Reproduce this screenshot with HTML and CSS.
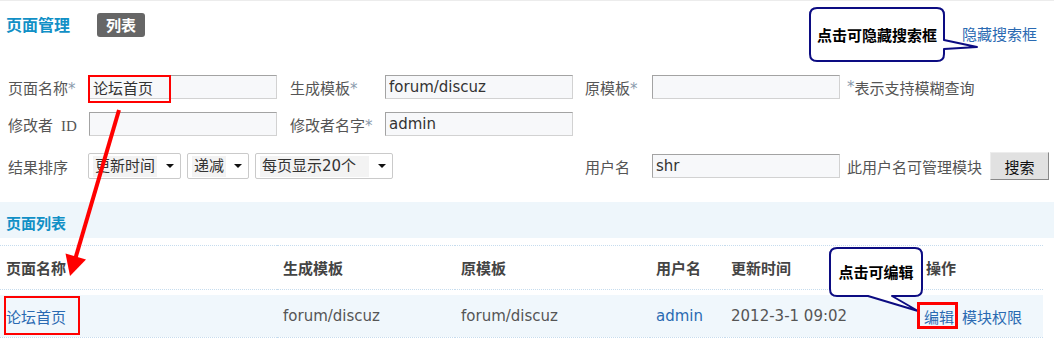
FILE: index.html
```html
<!DOCTYPE html>
<html lang="zh-CN">
<head>
<meta charset="utf-8">
<title>页面管理</title>
<link rel="stylesheet" href="styles.css">
</head>
<body>
<div class="page">
  <header class="topbar">
    <h1 class="title">页面管理</h1>
    <span class="badge">列表</span>
    <a class="toggle" href="#">隐藏搜索框</a>
  </header>

  <form class="search">
    <div class="frow">
      <label class="lbl">页面名称<i>*</i></label>
      <input class="txt" value="论坛首页">
      <label class="lbl p13">生成模板<i>*</i></label>
      <input class="txt" value="forum/discuz">
      <label class="lbl p12">原模板<i>*</i></label>
      <input class="txt" value="">
      <span class="note"><i>*</i>表示支持模糊查询</span>
    </div>
    <div class="frow">
      <label class="lbl">修改者<span class="id">ID</span></label>
      <input class="txt" value="">
      <label class="lbl p13">修改者名字<i>*</i></label>
      <input class="txt" value="admin">
    </div>
    <div class="frow r3">
      <label class="lbl">结果排序</label>
      <div class="sorts">
        <div class="sel s1"><span>更新时间</span><b class="caret"></b></div>
        <div class="sel s2"><span>递减</span><b class="caret"></b></div>
        <div class="sel s3"><span class="wide">每页显示20个</span><b class="caret"></b></div>
      </div>
      <label class="lbl p12">用户名</label>
      <input class="txt" value="shr">
      <span class="note">此用户名可管理模块<button type="button" class="btn">搜索</button></span>
    </div>
  </form>

  <div class="sec">页面列表</div>

  <table class="list">
    <colgroup>
      <col class="c1"><col class="c2"><col class="c3"><col class="c4"><col class="c5"><col class="c6">
    </colgroup>
    <thead>
      <tr><th>页面名称</th><th>生成模板</th><th>原模板</th><th>用户名</th><th>更新时间</th><th>操作</th></tr>
    </thead>
    <tbody>
      <tr>
        <td><a href="#">论坛首页</a></td>
        <td>forum/discuz</td>
        <td>forum/discuz</td>
        <td><a href="#">admin</a></td>
        <td>2012-3-1 09:02</td>
        <td><a href="#">编辑</a><a class="perm" href="#">模块权限</a></td>
      </tr>
    </tbody>
  </table>

  <svg class="overlay" width="1054" height="344" viewBox="0 0 1054 344" aria-hidden="true">
    <path class="bubble" d="M817,8 H937 Q944,8 944,15 V40 L977,47 L944,49 V54 Q944,61 937,61 H817 Q810,61 810,54 V15 Q810,8 817,8 Z"/>
    <path class="bubble" d="M837,248 H915 Q922,248 922,255 V289 Q922,296 915,296 H892 L918,311 L868,296 H837 Q830,296 830,289 V255 Q830,248 837,248 Z"/>
    <rect class="mark" x="89" y="76" width="81" height="26"/>
    <rect class="mark" x="5" y="297" width="74" height="37"/>
    <rect class="mark thick" x="918.5" y="303.5" width="38" height="24"/>
    <line class="arrow" x1="119" y1="110" x2="75.5" y2="258"/>
    <polygon class="head" points="70,276 65.5,253.5 86,259.5"/>
  </svg>
  <div class="callout co1">点击可隐藏搜索框</div>
  <div class="callout co2">点击可编辑</div>
</div>
</body>
</html>
```

FILE: styles.css
```css
* { box-sizing: border-box; }

body {
  margin: 0;
  background: #fff;
  font-family: "DejaVu Sans", "Noto Sans CJK SC", sans-serif;
  font-size: 15px;
  color: #555;
}

a { color: #2a6ab2; text-decoration: none; }

.page {
  position: relative;
  width: 1054px;
  height: 344px;
  overflow: hidden;
  background: linear-gradient(#ececec, #ececec) top left / 100% 1px no-repeat;
}

/* top bar */
.topbar {
  display: flex;
  align-items: flex-start;
  height: 75px;
  padding: 13px 0 0 6px;
}
.title {
  margin: 1px 0 0;
  font-size: 16px;
  line-height: 20px;
  font-weight: bold;
  color: #1190c6;
  font-family: "Noto Sans CJK SC", sans-serif;
}
.badge {
  margin-left: 27px;
  height: 24px;
  line-height: 24px;
  padding: 0 9px;
  background: #666;
  border-radius: 3px;
  color: #fff;
  font-weight: bold;
  font-size: 15px;
  font-family: "Noto Sans CJK SC", sans-serif;
}
.toggle {
  margin-left: auto;
  margin-right: 17px;
  margin-top: 12px;
  line-height: 20px;
}

/* search form */
.frow {
  display: grid;
  grid-template-columns: 81px 188px 108px 188px 79px 188px 1fr;
  align-items: center;
  height: 24px;
  padding-left: 8px;
}
.frow + .frow { margin-top: 13px; }
.frow.r3 { margin-top: 16px; height: 28px; }

.lbl { white-space: nowrap; color: #555; }
.lbl.p13 { padding-left: 13px; }
.lbl.p12 { padding-left: 12px; }
.lbl i, .note i { font-style: normal; color: #8a9aac; }
.id { margin-left: 8px; font-family: "Liberation Serif", serif; }

.txt {
  width: 188px;
  height: 24px;
  margin: 0;
  padding: 0 3px;
  border: 1px solid;
  border-color: #a3a3a3 #d2d2d2 #d2d2d2 #a3a3a3;
  background: #f7f8fa;
  font: 15px "DejaVu Sans", "Noto Sans CJK SC", sans-serif;
  color: #333;
}

.note {
  display: flex;
  align-items: center;
  padding-left: 7px;
  white-space: nowrap;
  color: #555;
}

.sorts {
  grid-column: 2 / 5;
  display: flex;
  gap: 6px;
  margin-left: -1px;
}
.sel {
  display: flex;
  align-items: center;
  justify-content: space-between;
  height: 26px;
  padding: 0 6px 0 4px;
  background: #fff;
  border: 1px solid #cacaca;
  border-radius: 2px;
}
.sel span {
  background: #f3f3f3;
  color: #333;
  padding: 0 2px;
  line-height: 21px;
}
.sel span.wide { padding-right: 13px; }
.s1 { width: 93px; }
.s2 { width: 62px; }
.s3 { width: 138px; }
.caret {
  width: 0;
  height: 0;
  border-left: 4px solid transparent;
  border-right: 4px solid transparent;
  border-top: 4px solid #111;
}

.btn {
  margin-left: 8px;
  width: 59px;
  height: 28px;
  padding: 0;
  background: #e1e1e1;
  border: 1px solid;
  border-color: #ededed #888 #888 #ededed;
  font: 15px "Noto Sans CJK SC", sans-serif;
  color: #111;
}

/* section header */
.sec {
  margin-top: 22px;
  height: 36px;
  padding: 4px 0 0 6px;
  display: flex;
  align-items: center;
  background: #eef6fb;
  color: #1190c6;
  font-weight: bold;
  font-family: "Noto Sans CJK SC", sans-serif;
}

/* table */
.list {
  margin-top: 7px;
  width: 1043px;
  table-layout: fixed;
  border-collapse: separate;
  border-spacing: 0;
}
.c1 { width: 277px; }
.c2 { width: 178px; }
.c3 { width: 195px; }
.c4 { width: 75px; }
.c5 { width: 195px; }
.c6 { width: 123px; }

.list th {
  height: 45px;
  padding: 0 0 0 6px;
  text-align: left;
  font-weight: bold;
  color: #444;
  border-top: 1px dotted #c6dcee;
  border-bottom: 1px dotted #c6dcee;
  font-family: "Noto Sans CJK SC", sans-serif;
}
.list td {
  height: 48px;
  padding: 0 0 0 6px;
  background: #f0f7fc;
  background-clip: padding-box;
  border-top: 5px solid #fff;
  border-bottom: 1px dotted #c6dcee;
  white-space: nowrap;
  color: #555;
}
.list td:last-child { padding-left: 4px; }
.perm { margin-left: 8px; }

/* annotations */
.overlay {
  position: absolute;
  left: 0;
  top: 0;
  pointer-events: none;
}
.bubble { fill: #fff; stroke: #0c0c82; stroke-width: 2; stroke-linejoin: round; }
.mark { fill: none; stroke: #f00; stroke-width: 2; }
.mark.thick { stroke-width: 3; }
.arrow { stroke: #f00; stroke-width: 4; }
.head { fill: #f00; }

.callout {
  position: absolute;
  display: flex;
  align-items: center;
  justify-content: center;
  font-family: "Noto Sans CJK SC", sans-serif;
  font-size: 15px;
  font-weight: bold;
  color: #000;
  pointer-events: none;
}
.co1 { left: 810px; top: 8px; width: 134px; height: 52px; }
.co2 { left: 830px; top: 248px; width: 92px; height: 46px; }
```
